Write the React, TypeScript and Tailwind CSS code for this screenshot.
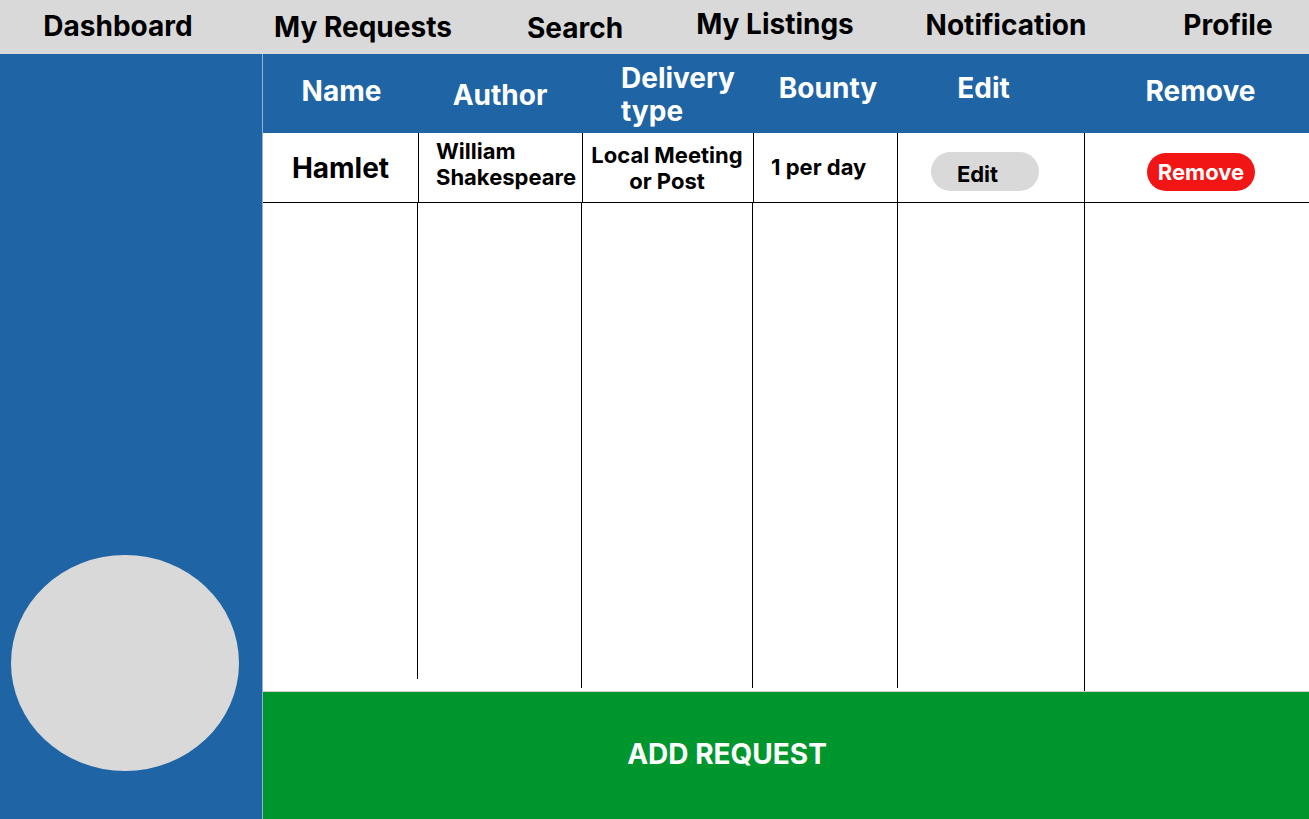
const navItems = [
  { label: "Dashboard", width: "w-[236px]", pad: "pt-[11px]" },
  { label: "My Requests", width: "w-[254px]", pad: "pt-[12px]" },
  { label: "Search", width: "w-[170px]", pad: "pt-[13px]" },
  { label: "My Listings", width: "w-[230px]", pad: "pt-[9px]" },
  { label: "Notification", width: "w-[232px]", pad: "pt-[10px]" },
  { label: "Profile", width: "w-[162px] ml-[25px]", pad: "pt-[10px]" },
];

function TopNav() {
  return (
    <nav className="flex h-[54px] bg-[#d9d9d9] text-[28px] font-bold text-black">
      {navItems.map((n) => (
        <div key={n.label} className={`${n.width} ${n.pad} shrink-0 text-center leading-[30px]`}>
          {n.label}
        </div>
      ))}
    </nav>
  );
}

const cols = "grid grid-cols-[155px_164px_171px_144px_187px_1fr]";

function HeaderRow() {
  return (
    <div className={`${cols} h-[79px] bg-[#1f65a6] text-[28px] leading-[32px] font-bold text-white`}>
      <div className="flex items-center justify-center pb-[5px] pl-[2px]">Name</div>
      <div className="flex items-center justify-center pt-[3px]">Author</div>
      <div className="flex flex-col justify-center pl-[39px] pt-[2px] leading-[33px]">
        <span>Delivery</span>
        <span>type</span>
      </div>
      <div className="flex items-center justify-center pb-[11px] pl-[6px]">Bounty</div>
      <div className="flex items-center justify-center pb-[11px] pr-[14px]">Edit</div>
      <div className="flex items-center justify-center pb-[5px] pl-[8px]">Remove</div>
    </div>
  );
}

function DataRow() {
  return (
    <div className={`${cols} h-[70px] border-b border-black bg-white text-black font-bold`}>
      <div className="flex items-center justify-center text-[28px]">Hamlet</div>
      <div className="flex flex-col justify-center border-l border-black pl-[17px] pb-[7px] text-[22px] leading-[26px]">
        <span>William</span>
        <span>Shakespeare</span>
      </div>
      <div className="flex flex-col items-center justify-center border-l border-black pr-[2px] text-[22px] leading-[26px]">
        <span>Local Meeting</span>
        <span>or Post</span>
      </div>
      <div className="flex items-center border-l border-black pl-[17px] text-[22px]">1 per day</div>
      <div className="flex items-start border-l border-black pl-[33px] pt-[19px]">
        <button className="flex h-[39px] w-[108px] items-center justify-center rounded-full bg-[#d9d9d9] pt-[5px] pr-[15px] text-[22px] font-bold text-black">
          Edit
        </button>
      </div>
      <div className="flex items-start border-l border-black pl-[62px] pt-[20px]">
        <button className="flex h-[38px] w-[108px] items-center justify-center rounded-full bg-[#f21515] text-[22px] font-bold text-white">
          Remove
        </button>
      </div>
    </div>
  );
}

function BodyLines() {
  return (
    <div className={`${cols} h-[488px] bg-white`}>
      <div />
      <div className="h-[476px] border-l border-black -ml-[1px]" />
      <div className="h-[485px] border-l border-black -ml-[1px]" />
      <div className="h-[485px] border-l border-black -ml-[1px]" />
      <div className="h-[485px] border-l border-black" />
      <div className="h-[488px] border-l border-black" />
    </div>
  );
}

export default function App() {
  return (
    <div className="flex h-[819px] w-[1309px] flex-col overflow-hidden bg-white font-['Inter',sans-serif]">
      <TopNav />
      <div className="flex flex-1">
        <aside className="flex w-[263px] shrink-0 flex-col justify-end border-r border-[#8fb3d6] bg-[#1f65a6] pb-[48px] pl-[11px]">
          <div className="h-[216px] w-[228px] rounded-[50%] bg-[#d9d9d9]" />
        </aside>
        <main className="flex flex-1 flex-col">
          <HeaderRow />
          <DataRow />
          <BodyLines />
          <div className="flex h-[128px] items-center justify-center border-t border-[#cfcfcf] bg-[#00962e] pr-[118px] pb-[3px] text-[28px] font-bold text-white">
            ADD REQUEST
          </div>
        </main>
      </div>
    </div>
  );
}
